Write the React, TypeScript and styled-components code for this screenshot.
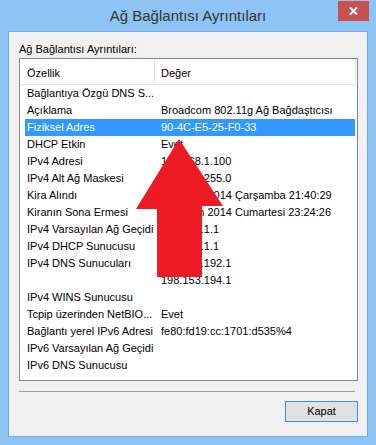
import React from "react";
import styled, { createGlobalStyle } from "styled-components";

const GlobalStyle = createGlobalStyle`
  html, body { margin: 0; padding: 0; background: #8dc4f4; }
  body { font-family: "Liberation Sans", Arial, sans-serif; }
  * { box-sizing: border-box; }
`;

const Window = styled.div`
  position: relative;
  width: 376px;
  height: 445px;
  background: #8dc4f4;
  display: flex;
  flex-direction: column;
  overflow: hidden;
`;

const TitleBar = styled.div`
  height: 31px;
  flex: none;
  display: grid;
  grid-template-columns: 1fr auto 1fr;
  align-items: start;
`;

const Title = styled.div`
  grid-column: 2;
  margin-top: 8px;
  font-size: 15px;
  line-height: 15px;
  color: #333;
  white-space: nowrap;
`;

const CloseButton = styled.div`
  grid-column: 3;
  justify-self: end;
  margin: 1px 7px 0 0;
  width: 31px;
  height: 20px;
  background: #c75050;
  display: flex;
  align-items: center;
  justify-content: center;
`;

const Client = styled.div`
  flex: 1;
  margin: 0 8px 8px;
  background: #f0f0f0;
  border: 1px solid #72a6da;
  display: flex;
  flex-direction: column;
  padding: 10px 9px 14px 10px;
  font-size: 11px;
  color: #000;
`;

const GroupLabel = styled.div`
  line-height: 14px;
  height: 14px;
  white-space: nowrap;
`;

const ListBox = styled.div`
  margin-top: 2px;
  height: 323px;
  flex: none;
  background: #fff;
  border: 1px solid #828790;
  display: flex;
  flex-direction: column;
`;

const Header = styled.div`
  width: 336px;
  height: 26px;
  display: grid;
  grid-template-columns: 135px 201px;
  border-bottom: 1px solid #e5e5e5;
`;

const HeaderCell = styled.div<{ $pad: number }>`
  border-right: 1px solid #e5e5e5;
  padding: 7px 0 0 ${(p) => p.$pad}px;
  line-height: 14px;
  white-space: nowrap;
`;

const Row = styled.div<{ $selected?: boolean }>`
  margin: 0 2px 0 5px;
  height: 17px;
  display: grid;
  grid-template-columns: 134px 1fr;
  line-height: 17px;
  background: ${(p) => (p.$selected ? "#3399ff" : "transparent")};
  color: ${(p) => (p.$selected ? "#fff" : "#000")};
`;

const Cell = styled.div`
  padding-left: 2px;
  white-space: nowrap;
  overflow: hidden;
`;

const Separator = styled.div`
  margin: 10px 3px 0 0;
  height: 1px;
  background: #a0a0a0;
  flex: none;
`;

const Footer = styled.div`
  margin-top: 9px;
  display: flex;
  justify-content: flex-end;
`;

const Button = styled.div`
  width: 73px;
  height: 21px;
  border: 1px solid #3c8fe8;
  background: #e1e1e1;
  text-align: center;
  line-height: 19px;
  font-size: 11px;
`;

const Overlay = styled.svg`
  position: absolute;
  left: 0;
  top: 0;
  pointer-events: none;
`;

const rows: [string, string][] = [
  ["Bağlantıya Özgü DNS S...", ""],
  ["Açıklama", "Broadcom 802.11g Ağ Bağdaştıcısı"],
  ["Fiziksel Adres", "90-4C-E5-25-F0-33"],
  ["DHCP Etkin", "Evet"],
  ["IPv4 Adresi", "192.168.1.100"],
  ["IPv4 Alt Ağ Maskesi", "255.255.255.0"],
  ["Kira Alındı", "19 Nisan 2014 Çarşamba 21:40:29"],
  ["Kiranın Sona Ermesi", "12 Nisan 2014 Cumartesi 23:24:26"],
  ["IPv4 Varsayılan Ağ Geçidi", "192.168.1.1"],
  ["IPv4 DHCP Sunucusu", "192.168.1.1"],
  ["IPv4 DNS Sunucuları", "198.153.192.1"],
  ["", "198.153.194.1"],
  ["IPv4 WINS Sunucusu", ""],
  ["Tcpip üzerinden NetBIO...", "Evet"],
  ["Bağlantı yerel IPv6 Adresi", "fe80:fd19:cc:1701:d535%4"],
  ["IPv6 Varsayılan Ağ Geçidi", ""],
  ["IPv6 DNS Sunucusu", ""],
];

export default function App() {
  return (
    <>
      <GlobalStyle />
      <Window>
        <TitleBar>
          <Title>Ağ Bağlantısı Ayrıntıları</Title>
          <CloseButton>
            <svg width="9" height="8" viewBox="0 0 9 8">
              <path d="M1 0.5 L8 7.5 M8 0.5 L1 7.5" stroke="#fff" strokeWidth="2" />
            </svg>
          </CloseButton>
        </TitleBar>
        <Client>
          <GroupLabel>Ağ Bağlantısı Ayrıntıları:</GroupLabel>
          <ListBox>
            <Header>
              <HeaderCell $pad={7}>Özellik</HeaderCell>
              <HeaderCell $pad={6}>Değer</HeaderCell>
            </Header>
            {rows.map(([k, v], i) => (
              <Row key={i} $selected={i === 2}>
                <Cell>{k}</Cell>
                <Cell>{v}</Cell>
              </Row>
            ))}
          </ListBox>
          <Separator />
          <Footer>
            <Button>Kapat</Button>
          </Footer>
        </Client>
        <Overlay width="376" height="445" viewBox="0 0 376 445">
          <polygon
            points="179,139 223,206 202,206 202,277 157,277 157,209 136,209"
            fill="#ed1c24"
          />
        </Overlay>
      </Window>
    </>
  );
}
